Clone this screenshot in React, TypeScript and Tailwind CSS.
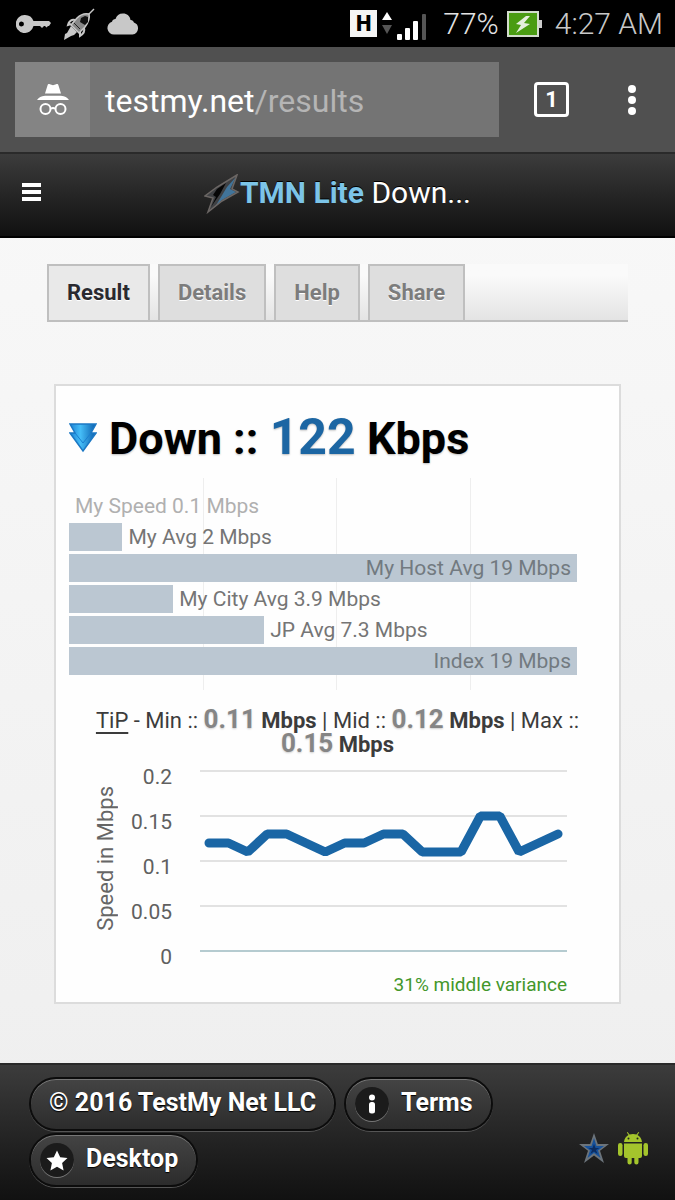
import { useState, type JSX, type ReactNode } from "react";

interface SpeedBar {
  label: string;
  mbps: number;
  muted?: boolean;
}

const TABS = ["Result", "Details", "Help", "Share"] as const;

const MAX_MBPS = 19;

const SPEED_BARS: readonly SpeedBar[] = [
  { label: "My Speed 0.1 Mbps", mbps: 0, muted: true },
  { label: "My Avg 2 Mbps", mbps: 2 },
  { label: "My Host Avg 19 Mbps", mbps: 19 },
  { label: "My City Avg 3.9 Mbps", mbps: 3.9 },
  { label: "JP Avg 7.3 Mbps", mbps: 7.3 },
  { label: "Index 19 Mbps", mbps: 19 },
];

const GRID_STEPS = [5, 10, 15] as const;

const TICKS = ["0.2", "0.15", "0.1", "0.05", "0"] as const;

const SAMPLES: readonly number[] = [
  0.12, 0.12, 0.11, 0.13, 0.13, 0.12, 0.11, 0.12, 0.12, 0.13, 0.13, 0.11, 0.11,
  0.11, 0.15, 0.15, 0.11, 0.12, 0.13,
];

const samplePoints = SAMPLES.map((value, index) => {
  const x = 9 + (index * 349) / (SAMPLES.length - 1);
  const y = 181 - value * 900;
  return `${x.toFixed(1)},${y.toFixed(1)}`;
}).join(" ");

export default function App(): JSX.Element {
  return (
    <div className="flex min-h-screen flex-col bg-gradient-to-b from-[#fafafa] to-[#eeeeee] font-['Roboto',sans-serif]">
      <StatusBar />
      <BrowserBar />
      <SiteHeader />
      <main className="flex-1 px-[47px] pt-[26px]">
        <ResultTabs />
        <section className="mx-[7px] mt-[62px] border-2 border-[#dcdcdc] bg-[#fefefe] pb-1 pl-[13px] pr-[42px]">
          <h1 className="flex items-center gap-3 pt-[19px] text-[45px] font-bold leading-[64px] text-black [text-shadow:0_1px_2px_#bbbbbb]">
            <DownIcon />
            <span>
              Down :: <span className="text-[50px] text-[#1c66a3]">122</span>{" "}
              Kbps
            </span>
          </h1>
          <SpeedBars />
          <TipLine />
          <SpeedChart />
          <p className="pr-[10px] text-right text-[19px] leading-[26px] text-[#43972a]">
            31% middle variance
          </p>
        </section>
      </main>
      <SiteFooter />
    </div>
  );
}

function StatusBar(): JSX.Element {
  return (
    <div className="flex h-[47px] items-center justify-between bg-black pl-4 pr-3 text-[#c8c8c8]">
      <div className="flex items-center gap-3">
        <svg width="35" height="18" viewBox="0 0 35 18" fill="currentColor">
          <path
            fillRule="evenodd"
            d="M9 0a9 9 0 0 1 8.500 6H33l2 2-2 3h-1l-1.500 1.500L29 11h-1l-2 2-2-2h-6.500A9 9 0 1 1 9 0ZM5.500 6.500a2.500 2.500 0 1 0 0 5 2.500 2.500 0 0 0 0-5Z"
          />
        </svg>
        <svg width="32" height="32" viewBox="0 0 32 32" fill="none">
          <path d="m31 1-7 7" stroke="currentColor" strokeWidth="1.500" />
          <path
            d="M26 6c1 4-1 9-4 13l-6 6-8-8 6-7c3-3 8-5 12-4Z"
            fill="#888"
            stroke="currentColor"
            strokeWidth="1.500"
          />
          <path d="m18 10 4-2 3 1v5l-3 3-5-3Z" fill="#111" />
          <path
            d="M12 12c-3-1-6 1-7 5l3-1m13 4c1 3-1 6-4 8v-4"
            stroke="currentColor"
            strokeWidth="2"
          />
          <path
            d="m8 18 6 6-3 3-3 1-7 4 1-6 2-1Z"
            fill="currentColor"
          />
          <path d="m11 15 6 6" stroke="#222" />
        </svg>
        <svg width="32" height="22" viewBox="0 0 32 22" fill="currentColor">
          <path d="M7 21.500a6.500 6.500 0 0 1-2-12.700C5.500 7 6.700 6 8.500 6 9.500 2.500 12 .5 16 .5S23 3 23.500 7c1.500-.2 3 .8 3.400 2.500A6.200 6.200 0 0 1 25.500 21.500Z" />
        </svg>
      </div>
      <div className="flex items-center text-[30px] font-light leading-none">
        <span className="flex h-[27px] w-[27px] items-center justify-center bg-[#f5f5f5] text-[22px] font-black text-black">
          H
        </span>
        <svg width="50" height="32" viewBox="0 0 50 32" className="mr-4 mt-1">
          <path d="m10 2 5 8H5Z" fill="#fff" />
          <path d="M5 15h10l-5 9Z" fill="#555" />
          <rect x="20" y="24" width="5" height="6" rx="1" fill="#fff" />
          <rect x="28" y="18" width="5" height="12" rx="1" fill="#fff" />
          <rect x="36" y="11" width="5" height="19" rx="1" fill="#fff" />
          <rect x="45" y="4" width="4" height="26" rx="1" fill="#555" />
        </svg>
        <span className="text-[#e4e4e4]">77%</span>
        <svg width="36" height="26" viewBox="0 0 36 26" className="ml-2 mr-3">
          <path d="M31 9h4v8h-4Z" fill="#ccc" />
          <rect x="1" y="1" width="30" height="24" fill="#4a9c12" stroke="#d2dccb" strokeWidth="2" />
          <path d="M19 5 9 13l5 1-5 8 14-9-6-1 6-7Z" fill="#e4efdc" />
        </svg>
        <span>4:27 AM</span>
      </div>
    </div>
  );
}

function BrowserBar(): JSX.Element {
  return (
    <div className="flex h-[105px] items-center bg-[#505050] pl-[15px] pr-[35px] text-white">
      <div className="flex h-[75px] flex-1 bg-[#747474]">
        <div className="flex w-[75px] items-center justify-center bg-[#848484]">
          <svg width="34" height="34" viewBox="0 0 34 34" fill="none">
            <path
              d="M9 10.500 11.500 2.500c.4-1.300 1.200-1.700 2.400-1.200l3.100 1 3.100-1c1.200-.5 2-.1 2.400 1.200L25 10.500ZM1 17c2-2.800 4-3.600 8-4.200h16c4 .6 6 1.400 8 4.200Z"
              fill="#fff"
            />
            <path
              d="M15 26c1-1.300 3-1.300 4 0"
              stroke="#fff"
              strokeWidth="2"
            />
            <circle cx="9.500" cy="26" r="5" stroke="#fff" strokeWidth="2" />
            <circle cx="24.500" cy="26" r="5" stroke="#fff" strokeWidth="2" />
          </svg>
        </div>
        <p className="flex-1 pl-[15px] text-[32px] leading-[78px]">
          testmy.net<span className="text-[#b5b5b5]">/results</span>
        </p>
      </div>
      <button
        type="button"
        aria-label="1 open tab"
        className="ml-[35px] flex h-[35px] w-[35px] items-center justify-center rounded border-[3px] border-white text-[22px] font-bold leading-none"
      >
        1
      </button>
      <button
        type="button"
        aria-label="More options"
        className="ml-[55px] flex w-4 flex-col items-center gap-[3px]"
      >
        <span className="h-2 w-2 rounded-full bg-white" />
        <span className="h-2 w-2 rounded-full bg-white" />
        <span className="h-2 w-2 rounded-full bg-white" />
      </button>
    </div>
  );
}

function SiteHeader(): JSX.Element {
  return (
    <header className="grid h-[86px] grid-cols-[1fr_auto_1fr] items-center border-y-2 border-b-black border-t-[#2a2a2a] bg-gradient-to-b from-[#3c3c3c] to-[#111111] px-[22px] pb-[6px]">
      <button
        type="button"
        aria-label="Menu"
        className="flex w-[19px] flex-col gap-[3px]"
      >
        <span className="h-1 w-full bg-white" />
        <span className="h-1 w-full bg-white" />
        <span className="h-1 w-full bg-white" />
      </button>
      <div className="flex items-center text-[30px] text-white [text-shadow:0_-1px_0_#000000]">
        <svg width="36" height="40" viewBox="0 0 36 40" fill="none" className="mt-1">
          <path
            d="M33 1 13 13 1 22l8 2-5 14 14-11 16-9-6-3Z"
            fill="#3f4144"
          />
          <path d="m32 3-9 10-12 20 7-7 14-8-6-3Z" fill="#41749a" />
          <path d="m22 9-9 6-4 6 3 2-5 10 9-13Z" fill="#070707" />
          <path
            d="M33 1 13 13 1 22l8 2-5 14 14-11 16-9-6-3Z"
            stroke="#6b6664"
            strokeWidth="1.500"
          />
        </svg>
        <span>
          <b className="font-bold text-[#7cc4e8]">TMN Lite</b> Down...
        </span>
      </div>
    </header>
  );
}

function ResultTabs(): JSX.Element {
  const [active, setActive] = useState<string>("Result");

  return (
    <div
      role="tablist"
      className="flex h-[58px] gap-2 border-b-2 border-[#bfbfbf] bg-gradient-to-b from-[#fafafa] from-20% to-[#e4e4e4]"
    >
      {TABS.map((tab) => (
        <button
          key={tab}
          type="button"
          role="tab"
          aria-selected={tab === active}
          onClick={() => {
            setActive(tab);
          }}
          className={`border-2 border-b-0 border-[#bfbfbf] px-[18px] pb-[2px] text-[22px] font-bold [text-shadow:0_1px_0_#ffffff] ${
            tab === active
              ? "bg-[#e9e9e9] text-[#2a2a30]"
              : "bg-[#dedede] text-[#7c7c7c]"
          }`}
        >
          {tab}
        </button>
      ))}
    </div>
  );
}

function DownIcon(): JSX.Element {
  return (
    <svg width="28" height="30" viewBox="0 0 28 30">
      <defs>
        <linearGradient id="down-fill" x1="0" y1="0" x2="1" y2="0">
          <stop offset="0" stopColor="#1b83d6" />
          <stop offset="0.4" stopColor="#45bdf7" />
          <stop offset="1" stopColor="#0b5fae" />
        </linearGradient>
      </defs>
      <path
        d="M1 1h26l-5 9h5L14 28 1 10h5Z"
        fill="url(#down-fill)"
        stroke="#1b78c4"
        strokeWidth="1.500"
      />
      <path d="m6 10 8 10 8-10" fill="none" stroke="#1a7fd0" />
    </svg>
  );
}

function SpeedBars(): JSX.Element {
  return (
    <div className="relative mt-[7px] h-[212px] pt-[14px]">
      {GRID_STEPS.map((step) => (
        <span
          key={step}
          className="absolute inset-y-0 w-px bg-[#eeeeee]"
          style={{ left: `${(step / MAX_MBPS) * 100}%` }}
        />
      ))}
      <ul className="relative flex flex-col gap-[3px] text-[21px] leading-[28px]">
        {SPEED_BARS.map((bar) => (
          <SpeedBarRow key={bar.label} bar={bar} />
        ))}
      </ul>
    </div>
  );
}

function SpeedBarRow({ bar }: { bar: SpeedBar }): JSX.Element {
  const full = bar.mbps >= MAX_MBPS;

  return (
    <li className="flex h-7 whitespace-nowrap text-[#757575]">
      <div
        className="bg-[#bbc7d2] pr-[6px] text-right text-[#727a80] empty:pr-0"
        style={{ width: `${(bar.mbps / MAX_MBPS) * 100}%` }}
      >
        {full ? bar.label : null}
      </div>
      {full ? null : (
        <span className={bar.muted ? "pl-[6px] text-[#b0b0b0]" : "pl-[6px]"}>
          {bar.label}
        </span>
      )}
    </li>
  );
}

function TipLine(): JSX.Element {
  return (
    <p className="-mr-[29px] px-3 pt-[18px] text-center text-[22px] leading-[23px] text-[#3c3c3c]">
      <a href="#tip" className="underline underline-offset-4">
        TiP
      </a>{" "}
      - Min :: <TipValue value="0.11" /> | Mid :: <TipValue value="0.12" /> | Max
      :: <TipValue value="0.15" />
    </p>
  );
}

function TipValue({ value }: { value: string }): JSX.Element {
  return (
    <b className="font-bold">
      <span className="text-[26px] text-[#858585] [text-shadow:0_1px_2px_#cccccc]">
        {value}
      </span>{" "}
      Mbps
    </b>
  );
}

function SpeedChart(): JSX.Element {
  return (
    <div className="flex pl-[22px] pr-[10px] pt-[6px] text-[21px] text-[#666666]">
      <span className="mt-6 rotate-180 self-start text-[22px] leading-[30px] [writing-mode:vertical-rl]">
        Speed in Mbps
      </span>
      <div className="flex w-[51px] flex-col gap-[15px] text-right leading-[30px]">
        {TICKS.map((tick) => (
          <span key={tick} className="text-[#606060]">
            {tick}
          </span>
        ))}
      </div>
      <svg viewBox="0 0 367 200" className="ml-7 min-w-0 flex-1 self-start pt-2">
        {TICKS.map((tick, index) => (
          <path
            key={tick}
            d={`M0 ${1 + index * 45}h367`}
            stroke={tick === "0" ? "#b5cbd0" : "#e2e2e2"}
            strokeWidth="2"
          />
        ))}
        <polyline
          points={samplePoints}
          fill="none"
          stroke="#1a66a5"
          strokeWidth="9"
          strokeLinecap="round"
          strokeLinejoin="bevel"
        />
      </svg>
    </div>
  );
}

interface FooterLinkProps {
  href: string;
  icon?: ReactNode;
  children: ReactNode;
}

function FooterLink({ href, icon, children }: FooterLinkProps): JSX.Element {
  return (
    <a
      href={href}
      className={`flex h-[54px] items-center gap-3 rounded-full border-2 border-[#0c0c0c] bg-gradient-to-b from-[#444444] to-[#2c2c2c] pr-[18px] text-[25px] font-bold text-white shadow-[inset_0_1px_0_#777777,0_1px_0_#555555] [text-shadow:0_1px_1px_#000000] ${
        icon ? "pl-[9px]" : "pl-[18px]"
      }`}
    >
      {icon ? (
        <span className="flex h-[34px] w-[34px] items-center justify-center rounded-full bg-[#1b1b1b] shadow-[0_1px_0_#777777]">
          {icon}
        </span>
      ) : null}
      <span className="pb-[2px]">{children}</span>
    </a>
  );
}

function SiteFooter(): JSX.Element {
  return (
    <footer className="flex h-[137px] justify-between border-t-2 border-[#2a2a2a] bg-gradient-to-b from-[#3c3c3c] to-[#111111] pl-[29px] pr-[26px] pt-3">
      <div className="flex flex-1 flex-wrap content-start gap-x-2 gap-y-[2px]">
        <FooterLink href="#copyright">© 2016 TestMy Net LLC</FooterLink>
        <FooterLink
          href="#terms"
          icon={
            <svg width="8" height="20" viewBox="0 0 8 20" fill="#fff">
              <circle cx="4" cy="3.500" r="3" />
              <rect x="1" y="8" width="6" height="11.500" rx="2.500" />
            </svg>
          }
        >
          Terms
        </FooterLink>
        <FooterLink
          href="#desktop"
          icon={
            <svg width="22" height="21" viewBox="0 0 22 21" fill="#fff">
              <path d="m11 .5 3.200 6.700 7.300.9-5.400 5 1.500 7.400-6.600-3.700-6.600 3.700 1.500-7.400-5.400-5 7.300-.9Z" />
            </svg>
          }
        >
          Desktop
        </FooterLink>
      </div>
      <div className="flex items-center gap-2 self-end pb-[35px]">
        <svg width="30" height="30" viewBox="0 0 30 30">
          <path
            d="m15 0 3.800 11H30l-9 6.800L25 30l-10-7.500L5 30l4-12.200L0 11h11.200Z"
            fill="#6c747b"
          />
          <path
            d="m15 5 2.500 8h7.500l-6 4.500 2.500 7.500-6.500-5-6.500 5 2.500-7.500-6-4.500h7.500Z"
            fill="#17529b"
          />
          <path d="m15 11 1.500 4h4l-3.500 2 1.500 4-3.500-2.500-3.500 2.500 1.500-4-3.500-2h4Z" fill="#0c2c60" />
        </svg>
        <svg width="32" height="34" viewBox="0 0 32 34" fill="#a4c52c">
          <path d="M7 11c.3-3.500 2-5.500 4.500-7L9.800 1.400l.8-.5L12.500 3.500a11 11 0 0 1 7 0L21.400.9l.8.5L20.500 4c2.500 1.500 4.200 3.500 4.500 7Z" />
          <path d="M7 12.500h18V25a2 2 0 0 1-2 2h-1.500v4.500a2 2 0 0 1-4.200 0V27h-2.600v4.500a2 2 0 0 1-4.200 0V27H9a2 2 0 0 1-2-2Z" />
          <rect x="1" y="12" width="4.500" height="13" rx="2.200" />
          <rect x="26.500" y="12" width="4.500" height="13" rx="2.200" />
          <circle cx="11.500" cy="7.500" r="1" fill="#222" />
          <circle cx="20.500" cy="7.500" r="1" fill="#222" />
        </svg>
      </div>
    </footer>
  );
}
